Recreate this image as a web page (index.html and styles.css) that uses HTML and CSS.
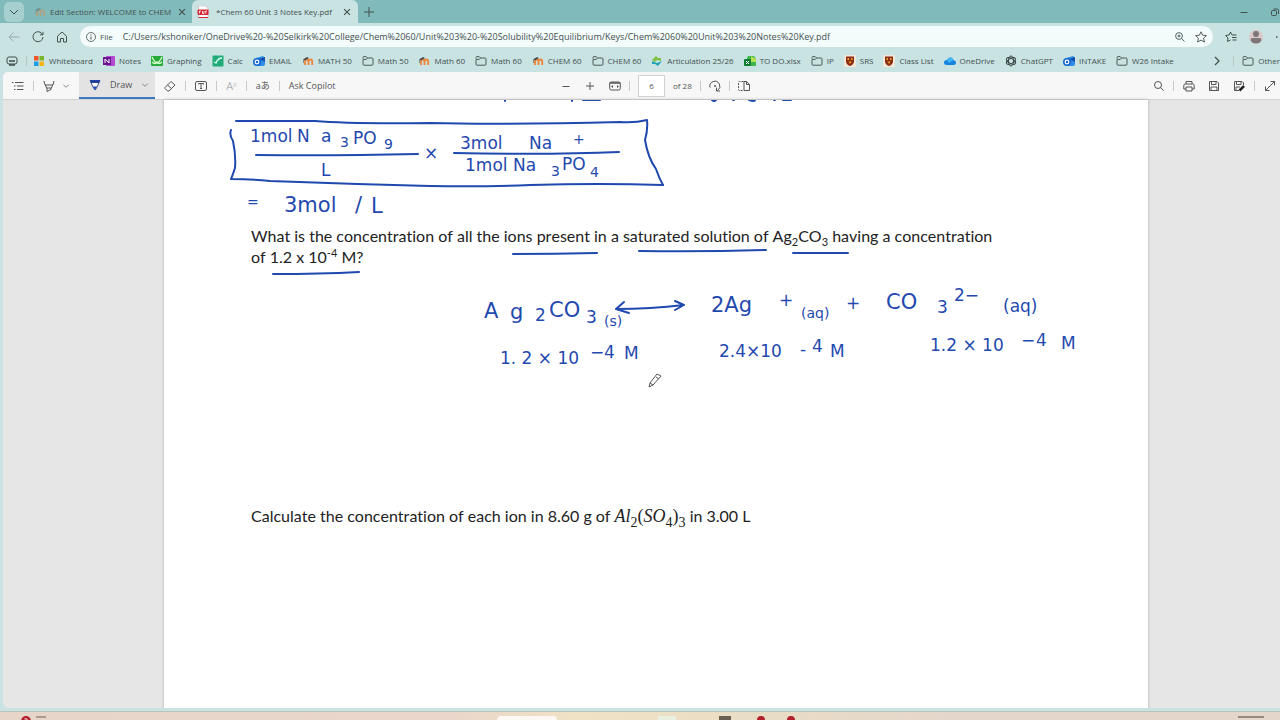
FILE: index.html
```html
<!DOCTYPE html>
<html lang="en">
<head>
    <meta charset="UTF-8">
    <meta name="viewport" content="width=device-width, initial-scale=1.0">
    <title>Chem 60 Unit 3 Notes Key.pdf</title>
    <link rel="stylesheet" href="styles.css">
</head>
<body>
    <!-- shared icons -->
    <svg class="sprite" aria-hidden="true">
        <symbol id="folder" viewBox="0 0 12 12"><path d="M1 3.5V2.6Q1 1.6 2 1.6H4.2L5.6 3H10Q11 3 11 4V9.2Q11 10.2 10 10.2H2Q1 10.2 1 9.2V4.4H4.3L5.6 3" fill="none" stroke="#4c5b5b"/></symbol>
        <symbol id="moodle" viewBox="0 0 12 12"><path d="M3 10V6.5Q3 4.5 4.8 4.5Q6.5 4.5 6.5 6.5V10M6.5 6.5Q6.5 4.5 8.3 4.5Q10.2 4.5 10.2 6.5V10" fill="none" stroke="#ee8434" stroke-width="1.8"/><path d="M1 4.5L5 2L7 3L3 5.5Z" fill="#4b4b4b"/><path d="M1.5 4.5V8" stroke="#777" stroke-width=".8"/></symbol>
        <symbol id="outlook" viewBox="0 0 12 12"><path d="M3 3L10 1L12 3V9Q12 11 10 11H3Z" fill="#2f8fe6"/><path d="M6 4L12 2V7Z" fill="#164fb0"/><circle cx="4" cy="7" r="4" fill="#1667cf"/><circle cx="4" cy="7" r="1.8" fill="none" stroke="#fff" stroke-width="1.2"/></symbol>
        <symbol id="crest" viewBox="0 0 12 12"><rect width="12" height="12" rx="1" fill="#f3e7d8"/><path d="M2 1.5H10V6Q10 9.5 6 11Q2 9.5 2 6Z" fill="#8b2d16"/><path d="M3.5 3H5V5H3.5ZM7 3H8.500V5H7ZM4.500 6.500H7.500L6 9Z" fill="#f1a02c"/></symbol>
        <symbol id="down" viewBox="0 0 12 12"><path d="M2 4L6 8L10 4" fill="none" stroke="currentColor"/></symbol>
        <symbol id="close" viewBox="0 0 12 12"><path d="M2.500 2.500L9.500 9.500M9.500 2.500L2.500 9.500" fill="none" stroke="currentColor" stroke-width="1.4"/></symbol>
    </svg>

    <div class="tabs">
        <button class="tab-menu" aria-label="Tab actions"><svg class="icon"><use href="#down"/></svg></button>
        <div class="tab">
            <svg class="icon faded"><use href="#moodle"/></svg>
            <span class="tab-title">Edit Section: WELCOME to CHEM</span>
            <button aria-label="Close tab"><svg class="icon-small"><use href="#close"/></svg></button>
        </div>
        <div class="tab active">
            <svg class="icon" viewBox="0 0 12 12"><path d="M1.500 0H8.500L11 2.500V12H1.500Z" fill="#fff" stroke="#c9a5a5" stroke-width=".6"/><rect x=".5" y="3.500" width="11" height="5.500" rx="1" fill="#d42a35"/><path d="M2.500 7.500V5H4M5.500 5V7.500H7V5M8.700 7.500V5H10" fill="none" stroke="#fff" stroke-width=".8"/><path d="M1.500 11.500H11" stroke="#d42a35"/></svg>
            <span class="tab-title">*Chem 60 Unit 3 Notes Key.pdf</span>
            <button aria-label="Close tab"><svg class="icon-small"><use href="#close"/></svg></button>
        </div>
        <button class="new-tab" aria-label="New tab"><svg class="icon" viewBox="0 0 12 12"><path d="M6 1V11M1 6H11" stroke="currentColor"/></svg></button>
        <div class="window-buttons">
            <button aria-label="Minimize"><svg class="icon-small" viewBox="0 0 10 10"><path d="M1.500 5.500H8.500" stroke="currentColor"/></svg></button>
            <button aria-label="Restore"><svg class="icon-small" viewBox="0 0 10 10"><rect x="1.500" y="3.500" width="5" height="5" rx="1" fill="none" stroke="currentColor"/><path d="M3.500 2H7Q8.500 2 8.500 3.500V7" fill="none" stroke="currentColor"/></svg></button>
        </div>
    </div>

    <div class="address-bar">
        <button class="back" aria-label="Back"><svg class="icon" viewBox="0 0 12 12"><path d="M11.500 6H1M5.500 1.500L1 6L5.500 10.500" fill="none" stroke="currentColor"/></svg></button>
        <button aria-label="Refresh"><svg class="icon" viewBox="0 0 12 12"><path d="M10.500 3.500A5 5 0 1 0 11 6M11 .8V3.800H8" fill="none" stroke="currentColor"/></svg></button>
        <button aria-label="Home"><svg class="icon" viewBox="0 0 12 12"><path d="M1.500 5.200L6 1L10.500 5.200V11H7.500V7.500H4.500V11H1.500Z" fill="none" stroke="currentColor" stroke-linejoin="round"/></svg></button>
        <div class="address">
            <svg class="icon-small" viewBox="0 0 10 10"><circle cx="5" cy="5" r="4.500" fill="none" stroke="currentColor" stroke-width=".8"/><path d="M5 4.500V7.500M5 2.500V3.500" stroke="currentColor"/></svg>
            <label for="url">File</label>
            <input id="url" type="text" value="C:/Users/kshoniker/OneDrive%20-%20Selkirk%20College/Chem%2060/Unit%203%20-%20Solubility%20Equilibrium/Keys/Chem%2060%20Unit%203%20Notes%20Key.pdf">
            <button aria-label="Zoom"><svg class="icon-small" viewBox="0 0 10 10"><circle cx="4" cy="4" r="3.400" fill="none" stroke="currentColor" stroke-width=".9"/><path d="M6.500 6.500L9.500 9.500M2.500 4H5.500M4 2.500V5.500" stroke="currentColor" stroke-width=".9"/></svg></button>
            <button aria-label="Add to favorites"><svg class="icon" viewBox="0 0 12 12"><path d="M6 .8L7.600 4.200L11.400 4.600L8.600 7.200L9.400 11L6 9.100L2.600 11L3.400 7.200L.6 4.600L4.400 4.200Z" fill="none" stroke="currentColor" stroke-width=".9" stroke-linejoin="round"/></svg></button>
        </div>
        <button aria-label="Favorites"><svg class="icon" viewBox="0 0 12 12"><path d="M7.500 4L7 4L5.500 1L4 4L.6 4.500L3 7L2.500 10.500L5.500 9M7.500 4H11.500M7 6.500H11.500M7.500 9H11.500" fill="none" stroke="currentColor"/></svg></button>
        <button class="profile" aria-label="Profile"><svg class="icon-large" viewBox="0 0 14 14"><rect width="14" height="14" rx="7" fill="#d6c8c5"/><circle cx="7" cy="4" r="3" fill="#7e7777"/><path d="M1.500 10Q1.500 8 4 8H10Q12.500 8 12.500 10Q11 13.500 7 13.500Q3 13.500 1.500 10" fill="#7e7777"/></svg></button>
        <button class="settings" aria-label="Settings"><svg viewBox="0 0 5 12"><path d="M1 6H2.500" stroke="currentColor" stroke-width="1.500"/></svg></button>
    </div>

    <nav class="bookmarks">
        <svg class="icon" viewBox="0 0 12 12"><rect x="1" y="2" width="10" height="7" rx="2" fill="none" stroke="#3e4c4c"/><path d="M3 6H9M3 10H9" stroke="#3e4c4c" stroke-width="1.500"/></svg>
        <i class="line"></i>
        <a href="#"><svg class="icon" viewBox="0 0 12 12"><path d="M1 1H5.500V5.500H1Z" fill="#ee5429"/><path d="M6.500 1H11V5.500H6.500Z" fill="#77b82a"/><path d="M1 6.500H5.500V11H1Z" fill="#1c9de4"/><path d="M6.500 6.500H11V11H6.500Z" fill="#f7b51b"/></svg>Whiteboard</a>
        <a href="#"><svg class="icon" viewBox="0 0 12 12"><rect x="3" y="1" width="9" height="10" rx="1" fill="#b44bd0"/><rect y="2" width="8" height="8" fill="#6c1590"/><path d="M2 8V4L6 8V4" fill="none" stroke="#fff"/></svg>Notes</a>
        <a href="#"><svg class="icon" viewBox="0 0 12 12"><rect y="1" width="12" height="10" rx="1" fill="#26a936"/><path d="M1 2Q4 8 6 8T11 2M1 7Q4 10 6 7Q8 10 11 7" fill="none" stroke="#d7ffcf" stroke-width="1.400"/></svg>Graphing</a>
        <a href="#"><svg class="icon" viewBox="0 0 12 12"><rect x=".5" y=".5" width="11" height="11" rx="1" fill="#21ab78"/><path d="M2 7L4 8Q6 3 10 3" fill="none" stroke="#d4fff0" stroke-width="1.300"/></svg>Calc</a>
        <a href="#"><svg class="icon"><use href="#outlook"/></svg>EMAIL</a>
        <a href="#"><svg class="icon"><use href="#moodle"/></svg>MATH 50</a>
        <a href="#"><svg class="icon"><use href="#folder"/></svg>Math 50</a>
        <a href="#"><svg class="icon"><use href="#moodle"/></svg>Math 60</a>
        <a href="#"><svg class="icon"><use href="#folder"/></svg>Math 60</a>
        <a href="#"><svg class="icon"><use href="#moodle"/></svg>CHEM 60</a>
        <a href="#"><svg class="icon"><use href="#folder"/></svg>CHEM 60</a>
        <a href="#"><svg class="icon" viewBox="0 0 12 12"><path d="M1 5L5 1L7 3H10V6L6 5L4 7Z" fill="#7fc243"/><path d="M11 6L7 11L4 9H1V6L6 8Z" fill="#20a5b7"/></svg>Articulation 25/26</a>
        <a href="#"><svg class="icon" viewBox="0 0 12 12"><path d="M4 1H10L12 4V11H3V3Z" fill="#3fb64b"/><path d="M7 1L12 4V7H7Z" fill="#b4e14f"/><rect y="4" width="7" height="7" rx="1" fill="#117b36"/><path d="M2 6L5 9M5 6L2 9" stroke="#fff"/></svg>TO DO.xlsx</a>
        <a href="#"><svg class="icon"><use href="#folder"/></svg>IP</a>
        <a href="#"><svg class="icon"><use href="#crest"/></svg>SRS</a>
        <a href="#"><svg class="icon"><use href="#crest"/></svg>Class List</a>
        <a href="#"><svg class="icon" viewBox="0 0 12 12"><path d="M3 10Q0 10 0 7.500Q0 5 3 5Q4 2 7 2.500Q9 3 9.500 5Q12 5.500 12 7.500Q12 10 9.500 10Z" fill="#1684df"/><path d="M3 5Q4 2 7 2.500Q9 3 9.500 5L5 8Z" fill="#40b7f3"/></svg>OneDrive</a>
        <a href="#"><svg class="icon" viewBox="0 0 12 12"><g fill="none" stroke="#3d4848"><ellipse cx="6" cy="6" rx="2.500" ry="5"/><ellipse cx="6" cy="6" rx="2.500" ry="5" transform="rotate(60 6 6)"/><ellipse cx="6" cy="6" rx="2.500" ry="5" transform="rotate(120 6 6)"/></g></svg>ChatGPT</a>
        <a href="#"><svg class="icon"><use href="#outlook"/></svg>INTAKE</a>
        <a href="#"><svg class="icon"><use href="#folder"/></svg>W26 Intake</a>
        <div class="more">
            <button aria-label="More bookmarks"><svg class="icon" viewBox="0 0 12 12"><path d="M4 2L8 6L4 10" fill="none" stroke="currentColor" stroke-width="1.300"/></svg></button>
            <i class="line"></i>
            <a href="#"><svg class="icon"><use href="#folder"/></svg>Other</a>
        </div>
    </nav>

    <div class="window">
        <div class="toolbar">
            <div class="tools">
                <button aria-label="Contents"><svg class="icon" viewBox="0 0 12 12"><path d="M0 2.500H1.500M3 2.500H11.500M2 6H3.500M5 6H11.500M2 9.500H3.500M5 9.500H11.500" stroke="currentColor"/></svg></button>
                <i class="line"></i>
                <button class="split" aria-label="Highlight"><svg class="icon" viewBox="0 0 12 12"><path d="M1 1L2 5H10L11 1M2.500 5L3.500 8H8.500L9.500 5M4 8V11.500L8 9.500V8" fill="none" stroke="currentColor"/></svg><svg class="icon-tiny"><use href="#down"/></svg></button>
                <button class="draw"><svg class="icon" viewBox="0 0 12 12"><path d="M1 1.500H11L7.500 9L6 11L4.500 9Z" fill="#fff" stroke="#365296"/><path d="M1 1H11L10 4H2Z" fill="#2342a0"/><path d="M4 7.500H8L6 11Z" fill="#234bb4"/></svg>Draw<svg class="icon-tiny"><use href="#down"/></svg></button>
                <button aria-label="Erase"><svg class="icon" viewBox="0 0 12 12"><path d="M1 7.500L7 1.500L11 5L5 11H3.500L1 8.500ZM3.500 5L8 9" fill="none" stroke="currentColor"/></svg></button>
                <i class="line"></i>
                <button aria-label="Add text"><svg class="icon" viewBox="0 0 12 12"><rect x=".5" y="1.500" width="11" height="9" rx="1.500" fill="none" stroke="currentColor"/><path d="M3.500 4.500V3.500H8.500V4.500M6 3.500V8.500M5 8.500H7" fill="none" stroke="currentColor"/></svg></button>
                <i class="line"></i>
                <button class="read">A<sup>&#8317;&#8317;</sup></button>
                <i class="line"></i>
                <button class="translate">aあ</button>
                <i class="line"></i>
                <button class="copilot">Ask Copilot</button>
            </div>
            <div class="paging">
                <button class="step" aria-label="Zoom out"><svg class="icon-small" viewBox="0 0 10 10"><path d="M1.500 5.500H8.500" stroke="currentColor"/></svg></button>
                <button class="step" aria-label="Zoom in"><svg class="icon-small" viewBox="0 0 10 10"><path d="M1 5H9M5 1V9" stroke="currentColor"/></svg></button>
                <button aria-label="Fit to width"><svg class="icon" viewBox="0 0 12 12"><rect x=".7" y="2" width="10.600" height="8" rx="1.500" fill="none" stroke="currentColor"/><path d="M.7 3H11.300" stroke="currentColor" stroke-width="1.500"/><path d="M2 6.500L4 5V8ZM10 6.500L8 5V8Z" fill="currentColor"/></svg></button>
                <i class="line"></i>
                <input id="page" type="text" value="6" aria-label="Page">
                <label for="page">of 28</label>
                <i class="line"></i>
                <button aria-label="Rotate"><svg class="icon" viewBox="0 0 12 12"><path d="M1 7.500A5 5 0 1 1 8.500 10.500M7.500 7.500V11H11" fill="none" stroke="currentColor"/><circle cx="6" cy="6" r="1" fill="currentColor"/></svg></button>
                <i class="line"></i>
                <button aria-label="Page view"><svg class="icon" viewBox="0 0 12 12"><path d="M5.500 1.500H1.500Q.5 1.500 .5 2.500V9.500Q.5 10.500 1.500 10.500H5.500" fill="none" stroke="currentColor" stroke-dasharray="2 1"/><path d="M6 1.500H8.500L11.500 4.500V10.500H6ZM8.500 1.500V4.500H11.500" fill="none" stroke="currentColor"/></svg></button>
            </div>
            <div class="file-tools">
                <button aria-label="Find"><svg class="icon-small" viewBox="0 0 10 10"><circle cx="4" cy="4" r="3.500" fill="none" stroke="currentColor"/><path d="M6.500 6.500L9.800 9.800" stroke="currentColor"/></svg></button>
                <i class="line"></i>
                <button aria-label="Print"><svg class="icon" viewBox="0 0 12 12"><path d="M3 4V1.500H9V4M3 9H.8V5.500Q.8 4 2.300 4H9.700Q11.200 4 11.200 5.500V9H9M3 7H9V11H3Z" fill="none" stroke="currentColor"/></svg></button>
                <button aria-label="Save"><svg class="icon" viewBox="0 0 12 12"><path d="M1.500 1.500H9L10.500 3V10.500H1.500ZM3.500 1.500V4.500H8V1.500M3 10.500V7H9V10.500" fill="none" stroke="currentColor"/></svg></button>
                <button aria-label="Save as"><svg class="icon" viewBox="0 0 12 12"><path d="M6 10.500H1.500V1.500H9L10.500 3V5M3.500 1.500V4.500H8V1.500M3 10.500V7H7" fill="none" stroke="currentColor"/><path d="M11 6L6.500 10.500" stroke="#222" stroke-width="2.500"/></svg></button>
                <i class="line"></i>
                <button aria-label="Full screen"><svg class="icon" viewBox="0 0 12 12"><path d="M1.500 10.500L10.500 1.500M6.500 1.500H10.500V5.500M1.500 6.500V10.500H5.500" fill="none" stroke="currentColor"/></svg></button>
            </div>
        </div>

        <main class="viewer">
            <article class="sheet">
                <p class="question">What is the concentration of all the ions present in a saturated solution of Ag<sub>2</sub>CO<sub>3</sub> having a concentration<br>of 1.2 x 10<sup>-4</sup> M?</p>
                <p class="question">Calculate the concentration of each ion in 8.60 g of <span class="math"><i>Al</i><sub>2</sub>(<i>SO</i><sub>4</sub>)<sub>3</sub></span> in 3.00 L</p>

                <!-- pen notes laid over the sheet -->
                <svg class="ink" viewBox="164 100 984 608" preserveAspectRatio="xMinYMin meet">
                    <g class="stroke">
                        <path d="M505 100V101M572 100V101M583 100H600M712 100Q714 102 716 100M733 100H734M749 100Q755 102 755 100M774 100H775M783 100H791"/>
                        <path d="M236 121L315 121Q350 124 430 123Q500 125 620 122Q635 123 647 120Q648 130 645 140Q648 158 656 169Q659 178 663 185"/>
                        <path d="M231 130Q229 135 233 141Q236 155 235 168Q232 177 231 179Q250 179 270 181Q350 184 430 186Q480 187 530 185Q600 183 663 185"/>
                        <path d="M256 155Q330 156 418 154M454 153Q550 155 619 152"/>
                        <path d="M513 254Q555 254 597 253M639 251Q700 252 766 250M793 253H848M273 274Q320 274 359 272"/>
                        <path d="M616 309Q650 309 684 305M624 302L616 309L629 313M675 301L684 305L675 310"/>
                    </g>
                    <g class="pen">
                        <text x="250" y="142">1mol</text>
                        <text x="297" y="142">N</text>
                        <text x="321" y="142">a</text>
                        <text class="low" x="340" y="147">3</text>
                        <text x="353" y="144">PO</text>
                        <text class="low" x="384" y="149">9</text>
                        <text x="321" y="176">L</text>
                        <text x="424" y="159">×</text>
                        <text x="460" y="149">3mol</text>
                        <text x="529" y="149">Na</text>
                        <text class="low" x="573" y="144">+</text>
                        <text x="465" y="171">1mol</text>
                        <text x="513" y="171">Na</text>
                        <text class="low" x="551" y="176">3</text>
                        <text x="562" y="170">PO</text>
                        <text class="low" x="590" y="177">4</text>
                        <text class="low" x="247" y="207">=</text>
                        <text class="big" x="284" y="212">3mol</text>
                        <text class="big" x="355" y="212">/</text>
                        <text class="big" x="371" y="213">L</text>
                        <text class="big" x="484" y="318">A</text>
                        <text class="big" x="510" y="319">g</text>
                        <text x="535" y="321">2</text>
                        <text class="big" x="549" y="317">CO</text>
                        <text x="586" y="323">3</text>
                        <text class="low" x="604" y="326">(s)</text>
                        <text class="big" x="711" y="312">2Ag</text>
                        <text x="779" y="306">+</text>
                        <text class="low" x="801" y="318">(aq)</text>
                        <text x="846" y="309">+</text>
                        <text class="big" x="886" y="309">CO</text>
                        <text x="937" y="313">3</text>
                        <text x="954" y="301">2−</text>
                        <text x="1003" y="312">(aq)</text>
                        <text x="500" y="364">1. 2 × 10</text>
                        <text x="590" y="358">−</text>
                        <text x="604" y="358">4</text>
                        <text x="624" y="359">M</text>
                        <text x="719" y="357">2.4×10</text>
                        <text x="800" y="355">-</text>
                        <text x="812" y="352">4</text>
                        <text x="830" y="357">M</text>
                        <text x="930" y="351">1.2 × 10</text>
                        <text x="1021" y="346">−</text>
                        <text x="1036" y="346">4</text>
                        <text x="1061" y="349">M</text>
                    </g>
                    <path class="cursor" d="M649 387L650 383L657 374L661 376L653 385ZM650 383L653 385M656 377L659 379"/>
                </svg>
            </article>
        </main>
    </div>

    <div class="taskbar">
        <svg class="icon-small" viewBox="0 0 10 10"><circle cx="5" cy="5" r="5" fill="#b3202c"/><path d="M3.500 3Q7 2 6 5" fill="none" stroke="#fff"/></svg>
        <span class="temperature"></span>
        <span class="search"></span>
        <span class="app"></span>
        <span class="app dark"></span>
        <span class="alert"></span>
        <span class="alert"></span>
        <span class="clock"></span>
    </div>
</body>
</html>
```

FILE: styles.css
```css
* {
    box-sizing: border-box;
}
body {
    display: flex;
    flex-direction: column;
    height: 100vh;
    margin: 0;
    overflow: hidden;
    background: #c9e2e2;
    color: #435151;
    font-family: "Open Sans", sans-serif;
    font-size: 8px;
    line-height: 12px;
}
button,
input {
    font: inherit;
    color: inherit;
    border: none;
    background: none;
    padding: 0;
}
button {
    display: flex;
    align-items: center;
    flex-shrink: 0;
}
svg {
    flex-shrink: 0;
}
a {
    color: inherit;
    text-decoration: none;
}
.sprite {
    position: absolute;
    width: 0;
    height: 0;
}
.icon {
    width: 12px;
    height: 12px;
}
.icon-small {
    width: 10px;
    height: 10px;
}
.icon-tiny {
    width: 8px;
    height: 8px;
}
.icon-large {
    width: 14px;
    height: 14px;
}
.faded {
    opacity: 0.4;
}
.line {
    width: 1px;
    height: 10px;
    background: #b9c5c5;
}

/* tabs */
.tabs {
    display: flex;
    align-items: center;
    height: 23px;
    background: #81baba;
}
.tab-menu {
    justify-content: center;
    width: 20px;
    height: 20px;
    margin: 0 10px 0 4px;
    border-radius: 5px;
    background: #a6d0cf;
}
.tab {
    display: flex;
    align-items: center;
    gap: 4px;
    width: 158px;
    height: 100%;
    padding: 0 5px 0 0;
}
.tab.active {
    width: 166px;
    padding: 0 6px 0 5px;
    border-radius: 6px 6px 0 0;
    background: #c9e2e2;
}
.tab-title {
    flex: 1;
    white-space: nowrap;
}
.tab.active .tab-title {
    padding-left: 3px;
}
.new-tab {
    margin-left: 5px;
}
.window-buttons {
    display: flex;
    gap: 21px;
    margin-left: auto;
}

/* address */
.address-bar {
    display: flex;
    align-items: center;
    gap: 12px;
    height: 27px;
    padding-left: 8px;
}
.back {
    color: #93aaaa;
}
.address {
    display: flex;
    flex: 1;
    align-items: center;
    gap: 4px;
    height: 21px;
    padding: 0 6px;
    border-radius: 11px;
    background: #f4fbfb;
}
.address input {
    flex: 1;
    min-width: 0;
    margin-left: 6px;
    font-size: 9px;
}
.address button {
    margin-left: 6px;
}
.settings svg {
    width: 5px;
    height: 12px;
}

/* bookmarks */
.bookmarks {
    display: flex;
    align-items: center;
    gap: 10px;
    height: 22px;
    padding-left: 6px;
    white-space: nowrap;
}
.bookmarks .line {
    margin: 0 -4px 0 -2px;
}
.bookmarks a {
    display: flex;
    align-items: center;
    gap: 4px;
}
.more {
    display: flex;
    align-items: center;
    gap: 12px;
    margin-left: auto;
}

/* pdf window */
.window {
    display: flex;
    flex: 1;
    flex-direction: column;
    min-height: 0;
    margin: 0 0 3px 3px;
    border-radius: 5px 0 0 6px;
    overflow: hidden;
    background: #e6e6e6;
}
.toolbar {
    display: flex;
    align-items: center;
    justify-content: space-between;
    height: 28px;
    border-bottom: 1px solid #d3d3d3;
    background: #f7f7f7;
    color: #555;
    font-size: 9px;
}
.toolbar .line {
    background: #c9c9c9;
}
.tools,
.paging,
.file-tools {
    display: flex;
    align-items: center;
    height: 100%;
    gap: 9px;
}
.tools {
    width: 558px;
    padding-left: 9px;
}
.split {
    gap: 7px;
}
.draw {
    gap: 9px;
    height: 100%;
    padding: 0 6px 0 10px;
    border-bottom: 2px solid #3c79bd;
    background: #e3e3e3;
}
.read {
    color: #b5b5b5;
    font-size: 11px;
}
.read sup {
    font-size: 8px;
}
.translate {
    font-family: "Open Sans", "Noto Sans CJK JP", sans-serif;
}
.paging {
    margin-right: auto;
    gap: 8px;
    font-size: 8px;
}
.step {
    margin-right: 6px;
}
.paging input {
    width: 27px;
    height: 22px;
    margin: 0;
    border: 1px solid #d2d2d2;
    background: #fff;
    text-align: center;
}
.file-tools {
    gap: 13px;
    padding-right: 4px;
}
.file-tools .line {
    margin: 0 -4px;
}
.viewer {
    display: flex;
    flex: 1;
    min-height: 0;
    padding: 0 132px 0 161px;
}
.sheet {
    position: relative;
    flex: 1;
    padding: 125px 86px 0 87px;
    background: #fff;
    box-shadow: 0 0 3px #aaa;
}
.question {
    margin: 0 0 238px;
    color: #222;
    font-family: Lato, sans-serif;
    font-size: 16px;
    font-kerning: none;
    font-variant-ligatures: none;
    line-height: 21px;
    white-space: nowrap;
}
.question sub,
.question sup {
    font-size: 11px;
    line-height: 0;
}
.math {
    font-family: "Liberation Serif", serif;
    font-size: 18px;
}
.math sub {
    font-size: 14px;
}
.ink {
    position: absolute;
    top: 0;
    left: 0;
    width: 984px;
    height: 608px;
}
.stroke {
    fill: none;
    stroke: #1f49ae;
    stroke-width: 2;
    stroke-linecap: round;
    stroke-linejoin: round;
}
.pen {
    fill: #1f49ae;
    font-family: "DejaVu Sans", sans-serif;
    font-size: 17px;
}
.big {
    font-size: 21px;
}
.low {
    font-size: 14px;
}
.cursor {
    fill: #fff;
    stroke: #555;
}

/* taskbar */
.taskbar {
    display: flex;
    align-items: flex-start;
    height: 9px;
    padding: 4px 16px 0 21px;
    overflow: hidden;
    border-top: 1px solid #b9c4bf;
    background: linear-gradient(90deg, #e8d5c9, #ead6ca 35%, #f0e2c5 45%, #e9dcc5 60%, #e5d6cc 75%);
}
.temperature {
    width: 10px;
    height: 2px;
    margin: 0 451px 0 5px;
    background: #aa9a90;
}
.search {
    width: 60px;
    height: 8px;
    margin-right: 101px;
    border-radius: 4px;
    background: #fdf8f4;
}
.app {
    width: 18px;
    height: 8px;
    margin-right: 43px;
    background: #e9f0e0;
}
.app.dark {
    width: 12px;
    margin: 0 26px 0 0;
    background: #6a6052;
}
.alert {
    width: 8px;
    height: 8px;
    margin-right: 22px;
    border-radius: 50%;
    background: #b3202c;
}
.clock {
    width: 26px;
    height: 2px;
    margin: 0 0 0 auto;
    background: #96877f;
}
```
